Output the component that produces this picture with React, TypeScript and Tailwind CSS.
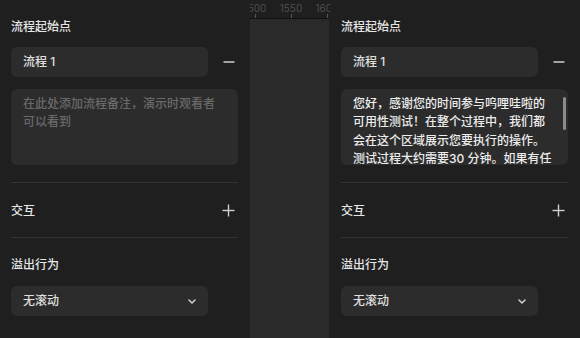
const FONT = { fontFamily: 'Inter, "Noto Sans CJK SC", sans-serif' }

const NOTE_TEXT =
  '您好，感谢您的时间参与呜哩哇啦的可用性测试！在整个过程中，我们都会在这个区域展示您要执行的操作。测试过程大约需要30 分钟。如果有任何问题，请随时告诉我们。'

function MinusIcon() {
  return (
    <svg width="12" height="12" viewBox="0 0 12 12" className="mr-[3px] text-[#d0d0d0]">
      <line x1="0.5" y1="6" x2="11.5" y2="6" stroke="currentColor" strokeWidth="1.5" />
    </svg>
  )
}

function PlusIcon() {
  return (
    <svg width="13" height="13" viewBox="0 0 13 13" className="mr-[3px] text-[#d0d0d0]">
      <line x1="0.5" y1="6.5" x2="12.5" y2="6.5" stroke="currentColor" strokeWidth="1.4" />
      <line x1="6.5" y1="0.5" x2="6.5" y2="12.5" stroke="currentColor" strokeWidth="1.4" />
    </svg>
  )
}

function Chevron() {
  return (
    <svg width="8" height="5" viewBox="0 0 8 5" className="text-[#d0d0d0]">
      <path d="M1 1l3 3 3-3" fill="none" stroke="currentColor" strokeWidth="1.5" strokeLinecap="round" strokeLinejoin="round" />
    </svg>
  )
}

function Panel({ note }: { note?: string }) {
  return (
    <div className="w-[250px] shrink-0 pl-[11px] pr-[12px] pt-[18px] text-[12px] font-medium">
      <div className="h-[18px] leading-[18px] text-[#e6e6e6]">流程起始点</div>

      <div className="mt-[11px] flex items-center justify-between">
        <div className="flex h-[30px] w-[197px] items-center rounded-[6px] bg-[#2c2c2c] pl-[12px] text-[#e0e0e0]">
          流程 1
        </div>
        <MinusIcon />
      </div>

      <div className="relative mt-[12px] h-[76px] overflow-hidden rounded-[6px] bg-[#2c2c2c] pl-[12px] pt-[6px]">
        {note ? (
          <>
            <p className="w-[200px] leading-[18.3px] text-[#ececec]">{note}</p>
            <div className="absolute right-[2px] top-[8px] h-[33px] w-[3px] rounded-full bg-[#8c8c8c]" />
          </>
        ) : (
          <p className="w-[200px] leading-[18.3px] text-[#6a6a6a]">
            在此处添加流程备注，演示时观看者可以看到
          </p>
        )}
      </div>

      <div className="mt-[17px] h-px bg-[#333333]" />

      <div className="flex h-[54px] items-center justify-between pt-px">
        <span className="text-[#e6e6e6]">交互</span>
        <PlusIcon />
      </div>

      <div className="h-px bg-[#333333]" />

      <div className="mt-[18px] h-[18px] leading-[18px] text-[#e6e6e6]">溢出行为</div>

      <div className="mt-[12px] flex h-[30px] w-[197px] items-center justify-between rounded-[6px] bg-[#2c2c2c] pl-[12px] pr-[12px] text-[#e0e0e0]">
        <span>无滚动</span>
        <Chevron />
      </div>
    </div>
  )
}

function RulerStrip() {
  const marks = [
    { x: 5, label: '1500' },
    { x: 41, label: '1550' },
    { x: 77, label: '1600' },
  ]
  return (
    <div className="flex w-[80px] shrink-0 flex-col">
      <div className="relative h-[18px] overflow-hidden">
        {marks.map((m) => (
          <div key={m.label}>
            <span
              className="absolute top-[2px] w-[30px] -translate-x-1/2 text-center text-[10px] leading-[12px] text-[#4d4d4d]"
              style={{ left: m.x }}
            >
              {m.label}
            </span>
            <span
              className="absolute bottom-0 h-[4px] w-px bg-[#555555]"
              style={{ left: m.x }}
            />
          </div>
        ))}
      </div>
      <div className="h-px w-[79px] bg-[#111111]" />
      <div className="w-[79px] flex-1 bg-[#2a2a2a]" />
    </div>
  )
}

export default function App() {
  return (
    <div className="flex h-[338px] w-[580px] overflow-hidden bg-[#1f1f1f]" style={FONT}>
      <Panel />
      <RulerStrip />
      <Panel note={NOTE_TEXT} />
    </div>
  )
}
